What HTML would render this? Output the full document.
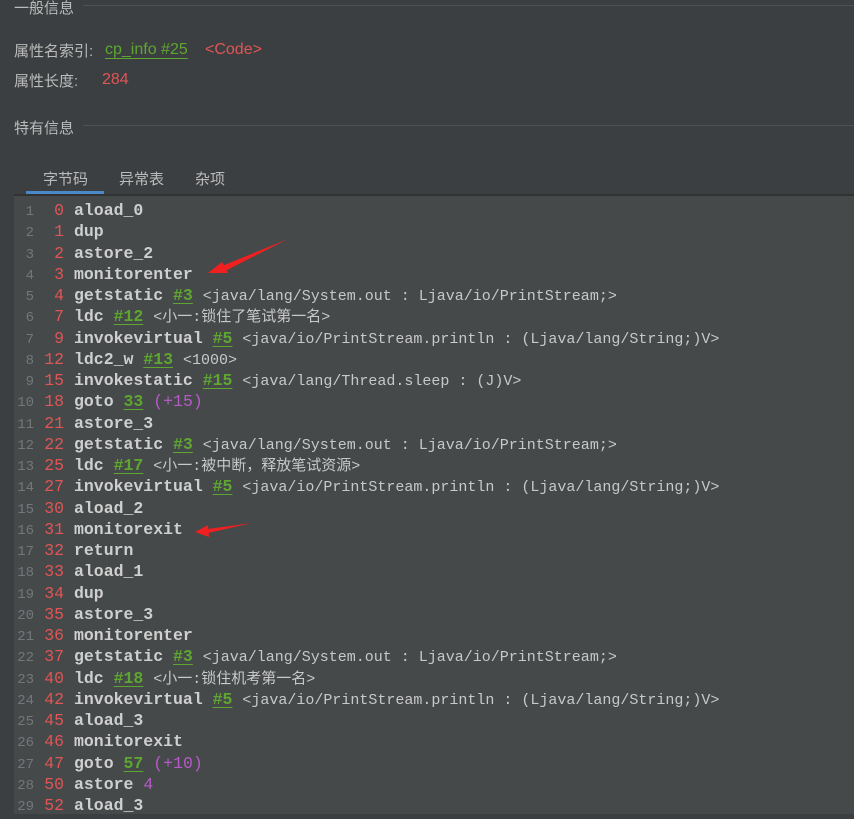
<!DOCTYPE html>
<html><head><meta charset="utf-8"><style>
body{margin:0;width:854px;height:819px;background:#3c3f41;overflow:hidden;position:relative;font-family:"Liberation Sans","Noto Sans CJK SC",sans-serif;color:#bbbbbb}
.t{position:absolute;font-size:15px;color:#bbb}
.hr{position:absolute;height:1px;background:#4e5254}
.code{position:absolute;left:14px;top:194px;right:0;height:618px;background:#45494a;border-top:2px solid #323232}
.ln{position:absolute;height:21.25px;line-height:21.25px;white-space:pre}
.n{position:absolute;top:2px;width:20px;text-align:right;left:0;color:#74777a;font-family:"Liberation Mono",monospace;font-size:14px}
.o{position:absolute;width:50px;text-align:right;color:#e05555;font-family:"Liberation Mono",monospace;font-size:16.5px}
.i{position:absolute;left:60px;font-family:"Liberation Mono","Noto Sans CJK SC",monospace;font-size:16.5px;font-weight:bold;color:#cfcfcf}
.c{font-weight:normal;font-size:15px;color:#c8c8c8}
.g{color:#5ea630;text-decoration:underline;text-underline-offset:3px}
.p{color:#b65ac8;font-weight:normal}
.tab{position:absolute;top:168px;font-size:15px;color:#bbb}
</style></head><body>
<div class="t" style="left:14px;top:-3px">一般信息</div><div class="hr" style="left:83px;right:0;top:5px"></div>
<div class="t" style="left:14px;top:40px">属性名索引:</div>
<div class="t" style="left:105px;top:41px;font-size:16px;color:#5ea630;text-decoration:underline;text-underline-offset:4px">cp_info #25</div>
<div class="t" style="left:205px;top:41px;font-size:16px;color:#e05555">&lt;Code&gt;</div>
<div class="t" style="left:14px;top:70px">属性长度:</div>
<div class="t" style="left:102px;top:71px;font-size:16px;color:#e05555">284</div>
<div class="t" style="left:14px;top:117px">特有信息</div><div class="hr" style="left:83px;right:0;top:125px"></div>
<div class="tab" style="left:43px">字节码</div><div class="tab" style="left:119px">异常表</div><div class="tab" style="left:195px">杂项</div>
<div style="position:absolute;left:26px;top:191px;width:78px;height:3px;background:#4a88c7"></div>
<div class="code" id="c"></div>
<svg style="position:absolute;left:0;top:0" width="854" height="819"><polygon points="288,239 222,266 225,271" fill="#f02020"/><polygon points="208,273 222,262 228,273" fill="#f02020"/><polygon points="252,523 208,529 208,533" fill="#f02020"/><polygon points="195,532 208,525 209,537" fill="#f02020"/></svg>
<script>
var L=[["0","aload_0"],["1","dup"],["2","astore_2"],["3","monitorenter"],["4",'getstatic <span class=g>#3</span> <span class=c>&lt;java/lang/System.out : Ljava/io/PrintStream;&gt;</span>'],["7",'ldc <span class=g>#12</span> <span class=c>&lt;小一:锁住了笔试第一名&gt;</span>'],["9",'invokevirtual <span class=g>#5</span> <span class=c>&lt;java/io/PrintStream.println : (Ljava/lang/String;)V&gt;</span>'],["12",'ldc2_w <span class=g>#13</span> <span class=c>&lt;1000&gt;</span>'],["15",'invokestatic <span class=g>#15</span> <span class=c>&lt;java/lang/Thread.sleep : (J)V&gt;</span>'],["18",'goto <span class=g>33</span> <span class=p>(+15)</span>'],["21","astore_3"],["22",'getstatic <span class=g>#3</span> <span class=c>&lt;java/lang/System.out : Ljava/io/PrintStream;&gt;</span>'],["25",'ldc <span class=g>#17</span> <span class=c>&lt;小一:被中断，释放笔试资源&gt;</span>'],["27",'invokevirtual <span class=g>#5</span> <span class=c>&lt;java/io/PrintStream.println : (Ljava/lang/String;)V&gt;</span>'],["30","aload_2"],["31","monitorexit"],["32","return"],["33","aload_1"],["34","dup"],["35","astore_3"],["36","monitorenter"],["37",'getstatic <span class=g>#3</span> <span class=c>&lt;java/lang/System.out : Ljava/io/PrintStream;&gt;</span>'],["40",'ldc <span class=g>#18</span> <span class=c>&lt;小一:锁住机考第一名&gt;</span>'],["42",'invokevirtual <span class=g>#5</span> <span class=c>&lt;java/io/PrintStream.println : (Ljava/lang/String;)V&gt;</span>'],["45","aload_3"],["46","monitorexit"],["47",'goto <span class=g>57</span> <span class=p>(+10)</span>'],["50",'astore <span class=p>4</span>'],["52","aload_3"]];
var h="";L.forEach(function(l,k){h+='<div class=ln style="top:'+(4+k*21.25)+'px;left:0;width:840px"><span class=n>'+(k+1)+'</span><span class=o>'+l[0]+'</span><span class=i>'+l[1]+'</span></div>'});
document.getElementById("c").innerHTML=h;
</script>
</body></html>
